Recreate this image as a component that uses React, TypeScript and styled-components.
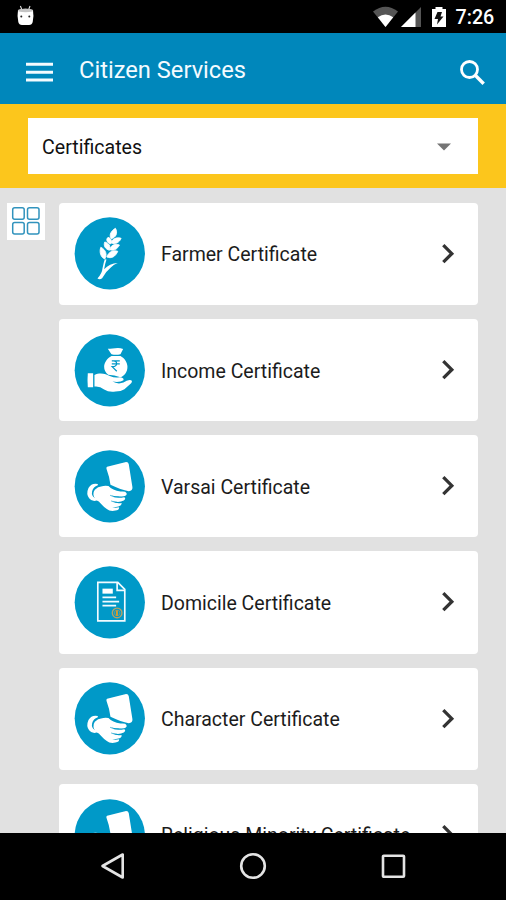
import React from "react";
import styled, { createGlobalStyle } from "styled-components";

const GlobalStyle = createGlobalStyle`
  * { box-sizing: border-box; }
  body { margin: 0; background: #000; font-family: Roboto, "Noto Sans", sans-serif; }
  svg { display: block; flex: none; overflow: visible; }
`;

const Screen = styled.div`
  width: 506px;
  height: 900px;
  display: flex;
  flex-direction: column;
  overflow: hidden;
  background: #e1e1e1;
`;

const StatusBar = styled.header`
  flex: none;
  height: 33.4px;
  padding: 0 11.5px 0 17px;
  display: flex;
  align-items: center;
  justify-content: space-between;
  background: #000;
`;

const StatusIcons = styled.div`
  display: flex;
  align-items: center;
`;

const Clock = styled.span`
  margin: 2px 0 0 8.5px;
  width: 39px;
  color: #fff;
  font-size: 19.7px;
  font-weight: 500;
  line-height: 31px;
  white-space: nowrap;
`;

const AppBar = styled.div`
  flex: none;
  height: 70.6px;
  padding: 0 21px 0 26px;
  display: flex;
  align-items: center;
  background: #0087bb;
`;

const IconButton = styled.button`
  padding: 0;
  border: 0;
  background: none;
`;

const MenuButton = styled(IconButton)`
  margin-top: 7px;
`;

const SearchButton = styled(IconButton)`
  margin: 8px 0 0 auto;
`;

const Title = styled.h1`
  margin: 3px 0 0 26px;
  color: #f4fbff;
  font-size: 23.7px;
  font-weight: 400;
  line-height: 30px;
`;

const FilterBar = styled.div`
  flex: none;
  height: 84.3px;
  padding: 14px 28px;
  background: #fcc61c;
`;

const Select = styled.div`
  height: 56.4px;
  padding: 1px 27px 0 14px;
  display: flex;
  align-items: center;
  justify-content: space-between;
  background: #fff;
  color: #111;
  font-size: 19.6px;
`;

const SelectValue = styled.span`
  padding-top: 2px;
`;

const Content = styled.main`
  flex: 1;
  min-height: 0;
  overflow: hidden;
  display: flex;
  align-items: flex-start;
  gap: 14px;
  padding: 14.4px 28px 0 7px;
`;

const GridToggle = styled.button`
  flex: none;
  width: 37.5px;
  height: 37.5px;
  padding: 0 0 1px 3.6px;
  border: 0;
  background: #fff;
`;

const List = styled.div`
  flex: 1;
  display: flex;
  flex-direction: column;
  gap: 14.05px;
`;

const Card = styled.div`
  flex: none;
  height: 102.2px;
  padding: 0 23.5px 0 15.7px;
  display: flex;
  align-items: center;
  border-radius: 4px;
  background: #fff;
`;

const Label = styled.span`
  flex: 1;
  margin: 3px 0 0 16.2px;
  color: #1c1c1c;
  font-size: 19.5px;
  line-height: 28px;
  white-space: nowrap;
`;

const NavBar = styled.nav`
  flex: none;
  height: 67.3px;
  padding: 0 100px;
  display: flex;
  align-items: center;
  justify-content: space-between;
  background: #000;
`;

const BLUE = "#0099c8";

const Farmer = () => (
  <g fill="#fff">
    <g stroke="#fff" strokeWidth="2.500">
      <path d="M166 71C155 77 145 90 153 102C167 100 174 85 166 71Z" />
      <path d="M144 98C136 104 141 115 151 118C157 110 153 101 144 98Z" />
      <path d="M183 101C170 97 156 102 153 115C165 120 178 114 183 101Z" />
      <path d="M134 112C129 123 136 134 148 137C153 125 146 115 134 112Z" />
      <path d="M178 121C165 116 153 121 149 135C162 140 172 133 178 121Z" />
      <path d="M122 128C117 141 121 158 134 163C142 150 137 135 122 128Z" />
      <path d="M173 140C159 135 145 142 140 157C154 163 166 156 173 140Z" />
    </g>
    <path d="M134 164L139 165Q134 180 132 194Q148 176 173 175Q161 179 152 189Q135 203 126 221Q119 226 112 222Q126 206 127 192Q130 175 134 164Z" />
  </g>
);

const Income = () => (
  <g fill="#fff">
    <path d="M143 85Q154 86 165 84Q178 82 189 86L181 102Q167 105 154 102Z" />
    <path d="M154 107H181C194 114 202 127 202 139C202 155 193 166 181 171Q163 164 144 163Q132 153 132 139C132 127 141 114 154 107Z" />
    <path d="M83 159H99V201H83Q81 180 83 159Z" />
    <path d="M103 164C119 156 136 160 151 168Q162 173 178 171Q193 172 190 180Q181 187 157 184Q173 193 190 187Q203 177 213 180Q218 183 213 189L193 207Q183 214 166 214Q146 217 132 208Q119 197 103 199Z" />
    <path d="M155 122H179M155 131H179M158 122C173 119 174 139 158 139H156L170 153" fill="none" stroke={BLUE} strokeWidth="3.6" />
  </g>
);

const HandCard = () => (
  <g fill="#fff">
    <path d="M141 95Q170 88 198 81Q205 81 206 88L217 157Q218 168 206 169Q183 164 151 149Q148 125 139 101Q138 97 141 95Z" />
    <path d="M113 147Q94 143 85 159Q77 177 87 190Q95 201 110 197L109 193Q92 184 96 169Q99 156 113 151Z" />
    <path d="M104 164Q113 155 126 154Q133 151 145 153Q157 166 181 170Q196 168 199 174Q203 184 184 185Q165 185 154 182Q168 192 192 187Q199 190 191 197Q178 204 157 199Q169 207 184 204Q187 211 175 215Q161 218 153 216Q165 220 177 217Q178 225 166 227Q149 230 140 222Q133 218 126 210L116 200Q103 195 100 180Q99 171 104 164Z" />
    <path d="M150 181Q162 188 176 186M153 198Q162 202 172 202" fill="none" stroke={BLUE} strokeWidth="2" />
  </g>
);

const Domicile = () => (
  <g fill="none" stroke="#f2fbff">
    <path d="M113 98H173L194 119V214H113Z" strokeWidth="5" />
    <path d="M171 100V122H194" strokeWidth="5" />
    <path d="M127 117H158V132H127Z" fill="#fff" stroke="none" />
    <path d="M127 143H168M127 156H177M127 168H168" strokeWidth="5.5" />
    <circle cx="171" cy="190" r="14.5" stroke="#b7a162" strokeWidth="4" />
    <circle cx="171" cy="190" r="8.500" stroke="#a89a63" strokeWidth="2" />
    <path d="M170.500 182V199" stroke="#d69a2d" strokeWidth="6" />
  </g>
);

type Kind = "farmer" | "income" | "hand" | "domicile";

const art: Record<Kind, { top: number; Drawing: React.FC }> = {
  farmer: { top: 37, Drawing: Farmer },
  income: { top: 41, Drawing: Income },
  hand: { top: 45, Drawing: HandCard },
  domicile: { top: 49, Drawing: Domicile },
};

const ServiceIcon = ({ kind }: { kind: Kind }) => {
  const { top, Drawing } = art[kind];
  return (
    <svg width="70.6" height="72.6" viewBox={`41.500 ${top} 212 218`}>
      <ellipse cx="149" cy={top + 109} rx="105.5" ry="108.5" fill={BLUE} />
      <Drawing />
    </svg>
  );
};

const Chevron = () => (
  <svg width="14" height="22" viewBox="0 0 14 22">
    <path d="M2.3 2.2L10.8 10.7L2.3 19.2" fill="none" stroke="#333" strokeWidth="3.3" />
  </svg>
);

const services: { label: string; kind: Kind }[] = [
  { label: "Farmer Certificate", kind: "farmer" },
  { label: "Income Certificate", kind: "income" },
  { label: "Varsai Certificate", kind: "hand" },
  { label: "Domicile Certificate", kind: "domicile" },
  { label: "Character Certificate", kind: "hand" },
  { label: "Religious Minority Certificate", kind: "hand" },
];

export default function App() {
  return (
    <Screen>
      <GlobalStyle />
      <StatusBar>
        <svg width="17" height="22" viewBox="0 0 17 22">
          <path d="M3.4 0L5 4M13 0L11.5 4" stroke="#ddd" strokeWidth="1.1" />
          <path d="M1 4Q8.500 1.500 16 4Q17 10 15.700 16Q15 19 12 19H5Q2 19 1.300 16Q0 10 1 4Z" fill="#fff" />
          <path d="M1 4Q8.500 1.500 16 4L15.500 5.500Q8.500 7 1.500 5.500Z" fill="#c4c4c4" />
          <circle cx="4.300" cy="10.500" r="1" fill="#222" />
          <circle cx="12.300" cy="10.500" r="1" fill="#222" />
        </svg>
        <StatusIcons>
          <svg width="74" height="22" viewBox="0 0 74 22">
            <path d="M0 5.500Q12.500-4 25 5.500L12.500 21Z" fill="#555" />
            <path d="M4.800 11.300Q12.500 5.500 20.200 11.300L12.500 21Z" fill="#fff" />
            <path d="M48 1V21H28Z" fill="#555" />
            <path d="M42.500 6.500V21H28Z" fill="#fff" />
            <path d="M62.500 1H69.500V3H73V21H59V3H62.500Z" fill="#fff" />
            <path d="M64.500 6H69L67.500 10.500H70.500L64 18.500L65 13H61.500Z" fill="#111" />
          </svg>
          <Clock>7:26</Clock>
        </StatusIcons>
      </StatusBar>
      <AppBar>
        <MenuButton aria-label="Menu">
          <svg width="27" height="20" viewBox="0 0 27 20">
            <path d="M0 2.300H27M0 10.200H27M0 18H27" stroke="#f4fbff" strokeWidth="3" />
          </svg>
        </MenuButton>
        <Title>Citizen Services</Title>
        <SearchButton aria-label="Search">
          <svg width="25" height="25" viewBox="0 0 25 25">
            <circle cx="9.500" cy="9.500" r="8" fill="none" stroke="#fff" strokeWidth="2.800" />
            <path d="M15.500 15.500L23.700 23.700" stroke="#fff" strokeWidth="3.400" />
          </svg>
        </SearchButton>
      </AppBar>
      <FilterBar>
        <Select>
          <SelectValue>Certificates</SelectValue>
          <svg width="14" height="8" viewBox="0 0 14 8">
            <path d="M0 0.500H14L7 7.500Z" fill="#757575" />
          </svg>
        </Select>
      </FilterBar>
      <Content>
        <GridToggle aria-label="Grid view">
          <svg width="30" height="30" viewBox="0 0 30 30" fill="none" stroke="#3193bd" strokeWidth="1.500">
            <rect x="1.700" y="1.800" width="11.500" height="11.500" rx="2" />
            <rect x="16.500" y="1.800" width="11.500" height="11.500" rx="2" />
            <rect x="1.700" y="16.500" width="11.500" height="11.500" rx="2" />
            <rect x="16.500" y="16.500" width="11.500" height="11.500" rx="2" />
          </svg>
        </GridToggle>
        <List>
          {services.map(({ label, kind }) => (
            <Card key={label}>
              <ServiceIcon kind={kind} />
              <Label>{label}</Label>
              <Chevron />
            </Card>
          ))}
        </List>
      </Content>
      <NavBar>
        <svg width="26" height="28" viewBox="0 0 26 28">
          <path d="M22.700 2.500V25.500L2.500 14Z" fill="none" stroke="#e4e4e4" strokeWidth="2.600" strokeLinejoin="round" />
        </svg>
        <svg width="28" height="28" viewBox="0 0 28 28">
          <circle cx="14" cy="14" r="11.800" fill="none" stroke="#e4e4e4" strokeWidth="2.600" />
        </svg>
        <svg width="26" height="26" viewBox="0 0 26 26">
          <rect x="3" y="2.800" width="21" height="21" rx="0.800" fill="none" stroke="#e4e4e4" strokeWidth="2.600" />
        </svg>
      </NavBar>
    </Screen>
  );
}
